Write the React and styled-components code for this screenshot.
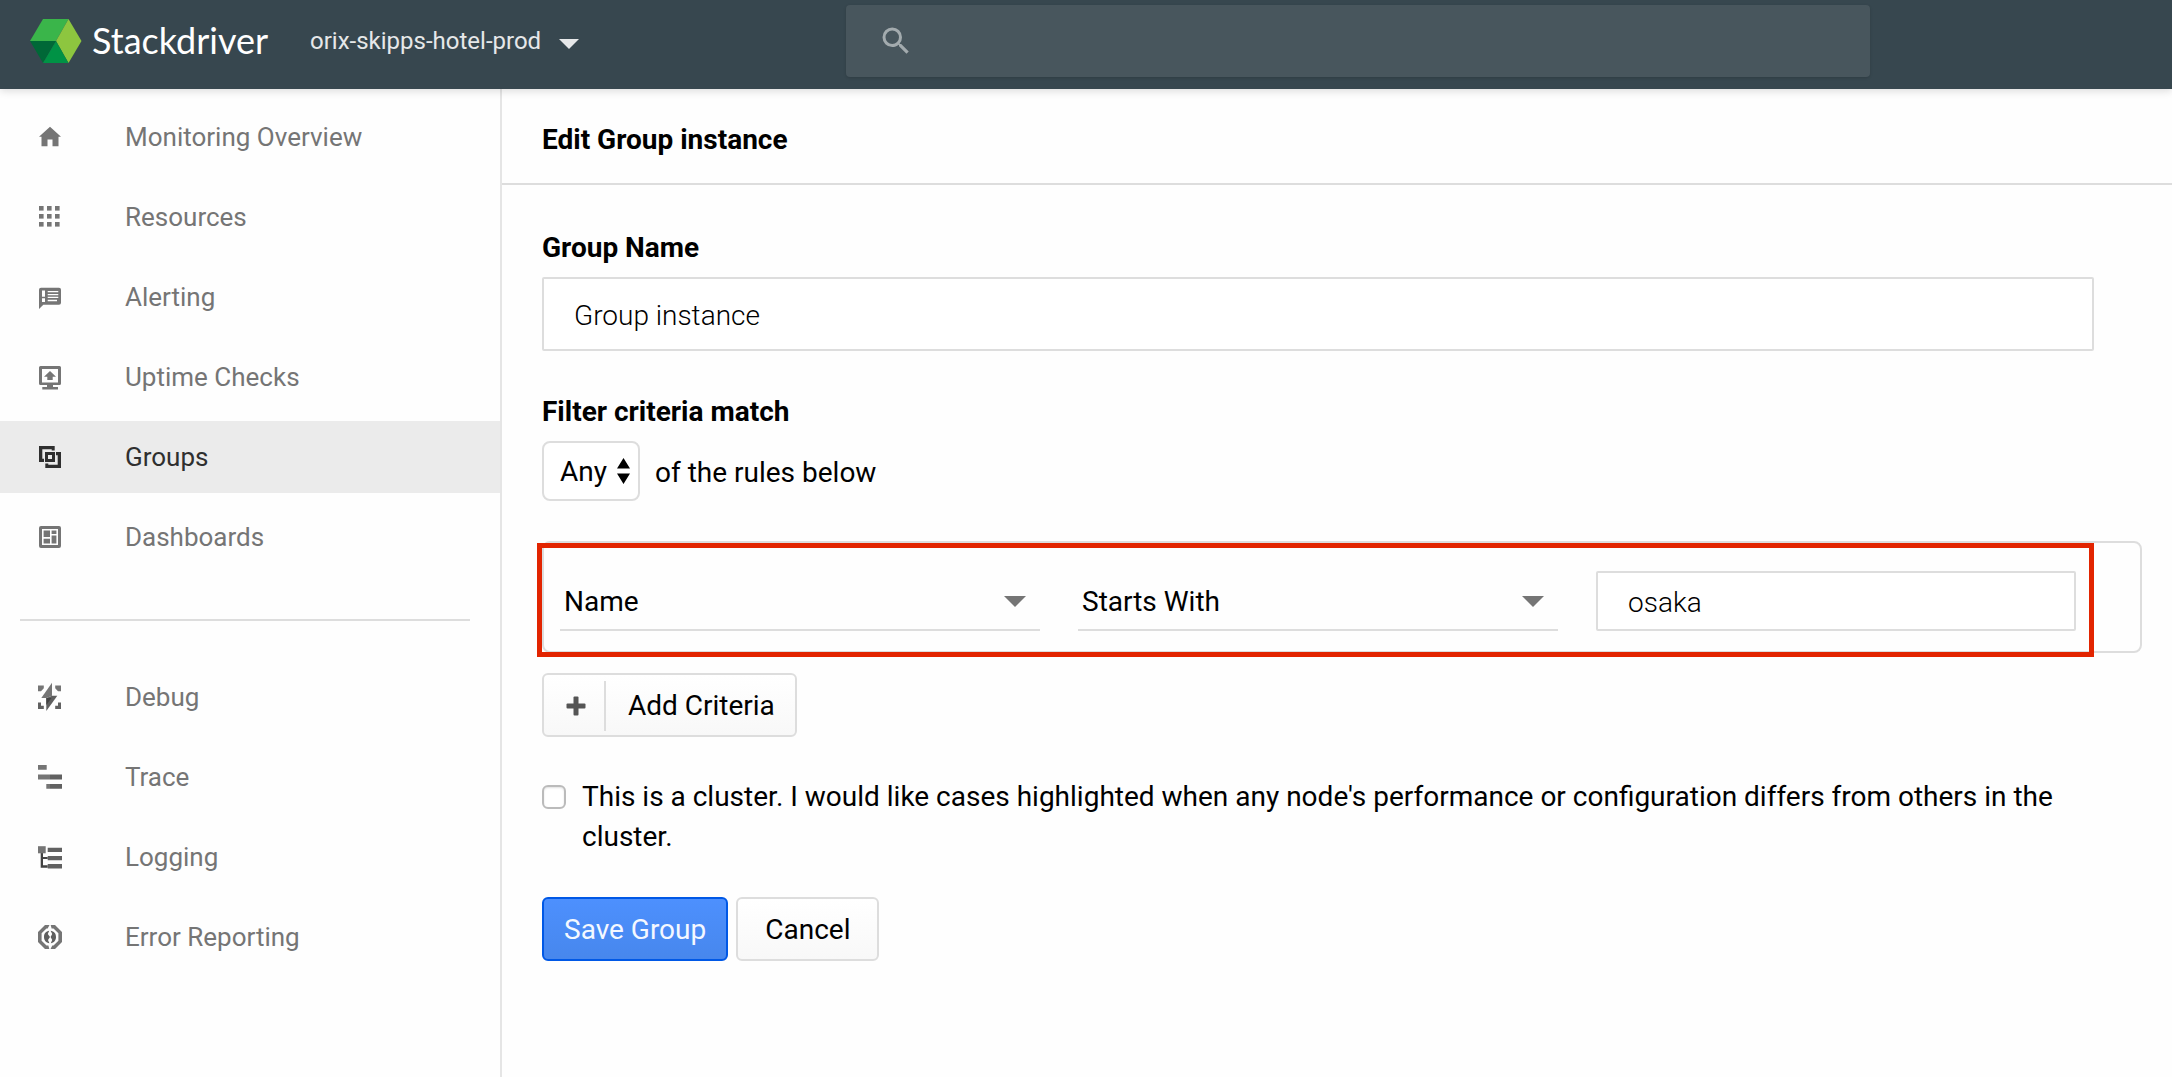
import React, { useState } from "react";
import styled, { createGlobalStyle } from "styled-components";

const GlobalStyle = createGlobalStyle`
  *, *::before, *::after { box-sizing: border-box; }
  body {
    margin: 0;
    background: #fefefe;
    color: #000;
    font-family: Roboto, "Liberation Sans", sans-serif;
    font-size: 28px;
    line-height: 40px;
  }
  button, input, select { font: inherit; color: inherit; }
`;

const Page = styled.div`
  display: flex;
  flex-direction: column;
  min-height: 100vh;
`;

/* ---------- top bar ---------- */

const TopBar = styled.header`
  display: flex;
  align-items: center;
  padding: 5px 302px 12px 30px;
  background: #37474f;
  box-shadow: 0 2px 8px rgba(0, 0, 0, 0.14);
  z-index: 1;
`;

const BarStart = styled.div`
  display: flex;
  align-items: center;
  flex: 0 0 816px;
`;

const Brand = styled.a`
  display: flex;
  align-items: center;
  gap: 10px;
  width: 280px;
  color: #fff;
  font-family: Lato, Roboto, sans-serif;
  font-size: 36px;
  text-decoration: none;
`;

const BrandName = styled.span`
  padding-bottom: 3px;
`;

const ProjectButton = styled.button`
  display: flex;
  align-items: center;
  gap: 18px;
  padding: 0;
  border: 0;
  background: none;
  color: #e6e8e9;
  font-size: 24px;

  > svg { margin-top: 5px; }
`;

const SearchBox = styled.label`
  display: flex;
  flex: 1;
  align-items: center;
  gap: 24px;
  height: 72px;
  padding: 0 32px;
  border-radius: 4px;
  background: #48565d;
  color: #a3abae;
  box-shadow: 0 1px 3px rgba(0, 0, 0, 0.15);
`;

const SearchInput = styled.input`
  flex: 1;
  min-width: 0;
  padding: 0;
  border: 0;
  outline: 0;
  background: none;
  color: #fff;
`;

/* ---------- side navigation ---------- */

const Body = styled.div`
  display: flex;
  flex: 1;
`;

const SideNav = styled.nav`
  flex: 0 0 502px;
  padding: 12px 0;
  border-right: 2px solid #e5e5e5;
`;

const NavList = styled.ul`
  display: flex;
  flex-direction: column;
  gap: 8px;
  margin: 0;
  padding: 0;
  list-style: none;
`;

const NavDivider = styled.hr`
  height: 2px;
  margin: 46px 30px 40px 20px;
  border: 0;
  background: #ddd;
`;

const NavLink = styled.a`
  display: flex;
  align-items: center;
  gap: 63px;
  height: 72px;
  padding: 0 38px;
  background: ${(p) => (p.$active ? "#ebebeb" : "transparent")};
  color: ${(p) => (p.$active ? "#2f2f2f" : "#757575")};
  font-size: 26px;
  text-decoration: none;
`;

const Glyph = styled.svg`
  flex: none;
  display: block;
  overflow: visible;
`;

/* ---------- form ---------- */

const Main = styled.main`
  flex: 1;
  min-width: 0;
`;

const Title = styled.h1`
  margin: 0;
  padding: 30px 40px 22px;
  border-bottom: 2px solid #ddd;
  font-size: 28px;
  font-weight: 700;
  line-height: 42px;
`;

const Form = styled.form`
  display: flex;
  flex-direction: column;
  gap: 40px;
  padding: 42px 78px 40px 40px;
`;

const Field = styled.div`
  display: flex;
  flex-direction: column;
  gap: 8px;
`;

const FieldLabel = styled.label`
  font-weight: 700;
  line-height: 42px;
`;

const TextInput = styled.input`
  width: 100%;
  min-width: 0;
  height: ${(p) => (p.$compact ? "60px" : "74px")};
  padding: 2px 30px 0;
  border: 2px solid #ddd;
  border-radius: 2px;
  background: #fff;
  font-weight: 300;
`;

const MatchRow = styled.div`
  display: flex;
  align-items: flex-end;
  gap: 15px;
  line-height: 56px;
`;

const SelectWrap = styled.div`
  display: grid;
  align-items: center;
  width: ${(p) => p.$width || "auto"};

  > * { grid-area: 1 / 1; }
  > svg {
    justify-self: end;
    margin-right: ${(p) => p.$inset};
    pointer-events: none;
  }
`;

const MatchSelect = styled.select`
  width: 100%;
  height: 60px;
  padding: 2px 0 0 16px;
  border: 2px solid #ddd;
  border-radius: 8px;
  background: #fff;
  line-height: 40px;
  appearance: none;
`;

const RuleSelect = styled.select`
  width: 100%;
  height: 60px;
  padding: 4px 40px 0 4px;
  border: 0;
  border-bottom: 2px solid #ddd;
  border-radius: 0;
  background: none;
  appearance: none;
`;

const Rules = styled.div`
  display: flex;
  flex-direction: column;
  align-items: flex-start;
  gap: 20px;
`;

const RuleCard = styled.div`
  position: relative;
  display: grid;
  grid-template-columns: repeat(3, 1fr);
  gap: 38px;
  align-self: stretch;
  margin-right: -48px;
  padding: 28px 64px 20px 16px;
  border: 2px solid #ddd;
  border-radius: 8px;
`;

const Highlight = styled.div`
  position: absolute;
  inset: 0 46px -6px -7px;
  border: 5px solid #e22400;
  pointer-events: none;
`;

const Button = styled.button`
  display: flex;
  align-items: center;
  height: 64px;
  padding: 2px ${(p) => p.$pad || "20px"} 0;
  border: 2px solid ${(p) => (p.$primary ? "#0058e6" : "#ddd")};
  border-radius: 6px;
  background: ${(p) =>
    p.$primary
      ? "linear-gradient(#4d90fe, #4787ed)"
      : "linear-gradient(#fff, #f8f8f8)"};
  color: ${(p) => (p.$primary ? "#f4f8ff" : "#000")};
`;

const AddButton = styled(Button)`
  padding-left: 0;
  gap: 22px;
`;

const AddIcon = styled.span`
  display: grid;
  place-items: center;
  width: 62px;
  height: 50px;
  padding-left: 3px;
  border-right: 2px solid #ddd;
`;

const CheckRow = styled.label`
  display: flex;
  align-items: flex-start;
  gap: 16px;
`;

const Checkbox = styled.input`
  flex: none;
  width: 24px;
  height: 24px;
  margin: 8px 0 0;
  border: 2px solid #bbb;
  border-radius: 6px;
  background: #fff;
  box-shadow: inset 0 1px 2px rgba(0, 0, 0, 0.12);
  appearance: none;

  &:checked { background: #4d90fe; }
`;

const Actions = styled.div`
  display: flex;
  gap: 8px;
`;

/* ---------- drawings ---------- */

const Logo = () => (
  <Glyph width="52" height="44" viewBox="0 0 52 44" aria-hidden="true">
    <path fill="#3ab54a" d="M13 0H38.5L26 22H0Z" />
    <path fill="#8dc63f" d="M38.5 0 51.5 22 38.5 44 26 22Z" />
    <path fill="#006837" d="M0 22H26L13 44Z" />
    <path fill="#009245" d="M26 22 38.5 44H13Z" />
  </Glyph>
);

const SearchIcon = () => (
  <Glyph width="36" height="36" viewBox="0 0 24 24" fill="currentColor" aria-hidden="true">
    <path d="M15.5 14h-.79l-.28-.27A6.47 6.47 0 0 0 16 9.5 6.5 6.5 0 1 0 9.5 16c1.61 0 3.09-.59 4.23-1.57l.27.28v.79l5 4.99L20.49 19l-4.99-5zm-6 0a4.5 4.5 0 1 1 0-9 4.5 4.5 0 0 1 0 9z" />
  </Glyph>
);

const Caret = ({ width, height, color }) => (
  <Glyph width={width} height={height} viewBox="0 0 22 11" preserveAspectRatio="none" aria-hidden="true">
    <path fill={color} d="M0 0H22L11 11Z" />
  </Glyph>
);

const UpDown = () => (
  <Glyph width="13" height="26" viewBox="0 0 13 26" aria-hidden="true">
    <path d="M6.5 0 13 10.5H0ZM0 15.5H13L6.5 26Z" />
  </Glyph>
);

const Plus = () => (
  <Glyph width="20" height="20" viewBox="0 0 20 20" fill="#555" aria-hidden="true">
    <rect x="7.5" y="0.5" width="5" height="19" rx="1" />
    <rect x="0.5" y="7.5" width="19" height="5" rx="1" />
  </Glyph>
);

const icons = {
  home: <path d="M12 1.7 1 11.7H3.5V21.3H9.5V14.5H14.5V21.3H20.5V11.7H23Z" />,
  grid: (
    <>
      {[1, 9, 17].map((y) =>
        [1, 9, 17].map((x) => <rect key={x + "-" + y} x={x} y={y} width="4.6" height="4.6" />)
      )}
    </>
  ),
  alert: (
    <path
      fillRule="evenodd"
      d="M3 2.7H21A2 2 0 0 1 23 4.7V17.7A2 2 0 0 1 21 19.7H5.3L1 24V4.7A2 2 0 0 1 3 2.7ZM4 5.6V11.7H7V5.6ZM4 13.3V17H7V13.3ZM9.7 6V7.3H20.3V6ZM9.7 9V10.3H20.3V9ZM9.7 11.7V13H20.3V11.7ZM9.7 14.8V16.2H19V14.8Z"
    />
  ),
  uptime: (
    <path
      fillRule="evenodd"
      d="M2.5 1H21.5A1.5 1.5 0 0 1 23 2.5V18.5A1.5 1.5 0 0 1 21.5 20H15V22H20V24.6H4.3V22H9V20H2.5A1.5 1.5 0 0 1 1 18.5V2.5A1.5 1.5 0 0 1 2.5 1ZM4 4V17.6H20V4ZM12 6 18 11.8H14.7V15H9.3V11.8H6Z"
    />
  ),
  groups: (
    <>
      <path d="M1 1H16.7V5.6H13.7V4.3H4.3V13.7H6V17H1Z" />
      <path d="M23 23H7.3V18.4H10.3V19.7H19.7V10.3H18V7H23Z" />
      <path fillRule="evenodd" d="M7 7H17V17H7ZM10 10V14H14V10Z" />
    </>
  ),
  dashboards: (
    <path
      fillRule="evenodd"
      d="M3 1H21A2 2 0 0 1 23 3V21A2 2 0 0 1 21 23H3A2 2 0 0 1 1 21V3A2 2 0 0 1 3 1ZM4 4V20H20V4ZM5.6 5.6H12V12H5.6ZM13.6 5.6H18.4V9H13.6ZM5.6 13.8H12V18.4H5.6ZM13.6 10.6H18.4V18.4H13.6Z"
    />
  ),
  debug: (
    <>
      <path d="M0 .4H5.8V3.2L3 6.3H0ZM23 .4H17.2V3.2L20 6.3H23Z" />
      <path fill="#616161" d="M0 24V17.6H3V20.8H5.8V24ZM23 24V17.6H20V20.8H17.2V24Z" />
      <path d="M14-2.3 3.3 13H8.3L14 10.7Z" />
      <path fill="#5f5f5f" d="M14 10.7H19.3L8.3 26V13Z" />
      <path fill="#424242" d="M8.3 13H13.5L8.3 20Z" />
    </>
  ),
  trace: (
    <>
      <path d="M0 0H8.7V4.8H0ZM0 9.5H12V14.5H0ZM8.3 19H12V23.7H8.3Z" />
      <path fill="#616161" d="M12 9.5H24V14.5H12ZM12 19H24V23.7H12Z" />
    </>
  ),
  logging: (
    <>
      <path fill="#424242" d="M2.7 8H5V12H9.7V14H5V20.3H9.7V22.7H2.7Z" />
      <path d="M0 1.2H7.7V8.3H0Z" />
      <path fill="#616161" d="M9.7 2.7H24V7H9.7ZM9.7 11H24V15.2H9.7ZM9.7 19H24V23.5H9.7Z" />
    </>
  ),
  error: (
    <>
      <path d="M7 0H11.5L9.7 3.6H8.5L3.6 8.3V15.7L8.5 20.4H10.4L11.3 24H7L0 17V7Z" />
      <path d="M17 24H12.5L14.3 20.4H15.5L20.4 15.7V8.3L15.5 3.6H13.6L12.7 0H17L24 7V17Z" />
      <path fill="#5f5f5f" d="M11.2 5.8 9.8 9 12 12 10 15 11.4 18.2C8 17.8 6 15.4 6 12S8 6.2 11.2 5.8Z" />
      <path fill="#5f5f5f" d="M12.8 18.2 14.2 15 12.6 12 14.2 9 12.6 5.8C16 6.2 18 8.6 18 12S16 17.8 12.8 18.2Z" />
    </>
  ),
};

const NavIcon = ({ name }) => (
  <Glyph width="24" height="24" viewBox="0 0 24 24" fill="currentColor" aria-hidden="true">
    {icons[name]}
  </Glyph>
);

const primaryNav = [
  { icon: "home", label: "Monitoring Overview" },
  { icon: "grid", label: "Resources" },
  { icon: "alert", label: "Alerting" },
  { icon: "uptime", label: "Uptime Checks" },
  { icon: "groups", label: "Groups", active: true },
  { icon: "dashboards", label: "Dashboards" },
];

const toolsNav = [
  { icon: "debug", label: "Debug" },
  { icon: "trace", label: "Trace" },
  { icon: "logging", label: "Logging" },
  { icon: "error", label: "Error Reporting" },
];

const NavItems = ({ items }) => (
  <NavList>
    {items.map((item) => (
      <li key={item.label}>
        <NavLink href="#" $active={item.active} aria-current={item.active ? "page" : undefined}>
          <NavIcon name={item.icon} />
          {item.label}
        </NavLink>
      </li>
    ))}
  </NavList>
);

export default function App() {
  const [groupName, setGroupName] = useState("Group instance");
  const [ruleValue, setRuleValue] = useState("osaka");
  const [isCluster, setIsCluster] = useState(false);

  return (
    <Page>
      <GlobalStyle />
      <TopBar>
        <BarStart>
          <Brand href="#">
            <Logo />
            <BrandName>Stackdriver</BrandName>
          </Brand>
          <ProjectButton type="button">
            orix-skipps-hotel-prod
            <Caret width={20} height={10} color="#e6e8e9" />
          </ProjectButton>
        </BarStart>
        <SearchBox>
          <SearchIcon />
          <SearchInput type="text" aria-label="Search" />
        </SearchBox>
      </TopBar>
      <Body>
        <SideNav>
          <NavItems items={primaryNav} />
          <NavDivider />
          <NavItems items={toolsNav} />
        </SideNav>
        <Main>
          <Title>Edit Group instance</Title>
          <Form onSubmit={(e) => e.preventDefault()}>
            <Field>
              <FieldLabel htmlFor="group-name">Group Name</FieldLabel>
              <TextInput
                id="group-name"
                type="text"
                value={groupName}
                onChange={(e) => setGroupName(e.target.value)}
              />
            </Field>
            <Field>
              <FieldLabel htmlFor="match">Filter criteria match</FieldLabel>
              <MatchRow>
                <SelectWrap $width="98px" $inset="10px">
                  <MatchSelect id="match" defaultValue="Any">
                    <option>Any</option>
                    <option>All</option>
                  </MatchSelect>
                  <UpDown />
                </SelectWrap>
                <span>of the rules below</span>
              </MatchRow>
            </Field>
            <Rules>
              <RuleCard>
                <SelectWrap $inset="14px">
                  <RuleSelect aria-label="Property" defaultValue="Name">
                    <option>Name</option>
                    <option>Tag</option>
                  </RuleSelect>
                  <Caret width={22} height={11} color="#757575" />
                </SelectWrap>
                <SelectWrap $inset="14px">
                  <RuleSelect aria-label="Operator" defaultValue="Starts With">
                    <option>Starts With</option>
                    <option>Contains</option>
                  </RuleSelect>
                  <Caret width={22} height={11} color="#757575" />
                </SelectWrap>
                <TextInput
                  $compact
                  type="text"
                  aria-label="Value"
                  value={ruleValue}
                  onChange={(e) => setRuleValue(e.target.value)}
                />
                <Highlight />
              </RuleCard>
              <AddButton type="button">
                <AddIcon>
                  <Plus />
                </AddIcon>
                Add Criteria
              </AddButton>
            </Rules>
            <CheckRow>
              <Checkbox
                type="checkbox"
                checked={isCluster}
                onChange={(e) => setIsCluster(e.target.checked)}
              />
              <span>
                This is a cluster. I would like cases highlighted when any node's performance or
                configuration differs from others in the cluster.
              </span>
            </CheckRow>
            <Actions>
              <Button type="submit" $primary>
                Save Group
              </Button>
              <Button type="button" $pad="27px">
                Cancel
              </Button>
            </Actions>
          </Form>
        </Main>
      </Body>
    </Page>
  );
}
